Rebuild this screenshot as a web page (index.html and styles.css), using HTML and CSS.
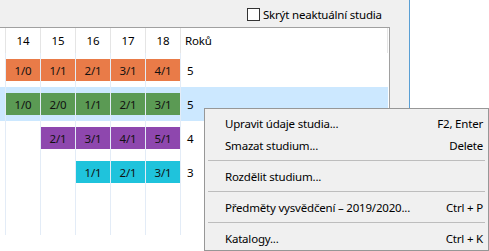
FILE: index.html
```html
<!DOCTYPE html>
<html lang="cs">
<head>
<meta charset="utf-8">
<title>Studia</title>
<link rel="stylesheet" href="styles.css">
</head>
<body>
<div class="app">
  <div class="left">
    <div class="toolbar">
      <label class="chk"><span class="box"></span><span>Skrýt neaktuální studia</span></label>
    </div>
    <div class="panel">
      <div class="row head">
        <div class="c0"></div>
        <div class="c">14</div>
        <div class="c">15</div>
        <div class="c">16</div>
        <div class="c">17</div>
        <div class="c">18</div>
        <div class="c last">Roků</div>
      </div>
      <div class="row">
        <div class="c0"></div>
        <div class="c"><span class="cell orange">1/0</span></div>
        <div class="c"><span class="cell orange">1/1</span></div>
        <div class="c"><span class="cell orange">2/1</span></div>
        <div class="c"><span class="cell orange">3/1</span></div>
        <div class="c"><span class="cell orange">4/1</span></div>
        <div class="c last"><span class="yrs">5</span></div>
      </div>
      <div class="row sel">
        <div class="c0"></div>
        <div class="c"><span class="cell green">1/0</span></div>
        <div class="c"><span class="cell green">2/0</span></div>
        <div class="c"><span class="cell green">1/1</span></div>
        <div class="c"><span class="cell green">2/1</span></div>
        <div class="c"><span class="cell green">3/1</span></div>
        <div class="c last"><span class="yrs">5</span></div>
      </div>
      <div class="row">
        <div class="c0"></div>
        <div class="c"></div>
        <div class="c"><span class="cell purple">2/1</span></div>
        <div class="c"><span class="cell purple">3/1</span></div>
        <div class="c"><span class="cell purple">4/1</span></div>
        <div class="c"><span class="cell purple">5/1</span></div>
        <div class="c last"><span class="yrs">4</span></div>
      </div>
      <div class="row">
        <div class="c0"></div>
        <div class="c"></div>
        <div class="c"></div>
        <div class="c"><span class="cell cyan">1/1</span></div>
        <div class="c"><span class="cell cyan">2/1</span></div>
        <div class="c"><span class="cell cyan">3/1</span></div>
        <div class="c last"><span class="yrs">3</span></div>
      </div>
      <div class="row filler">
        <div class="c0"></div>
        <div class="c"></div>
        <div class="c"></div>
        <div class="c"></div>
        <div class="c"></div>
        <div class="c"></div>
        <div class="c last"></div>
      </div>
    </div>
  </div>
  <div class="right"></div>
</div>

<div class="menu">
  <div class="item"><span>Upravit údaje studia...</span><span>F2, Enter</span></div>
  <div class="item"><span>Smazat studium...</span><span>Delete</span></div>
  <div class="sep"></div>
  <div class="item"><span>Rozdělit studium...</span><span></span></div>
  <div class="sep"></div>
  <div class="item"><span>Předměty vysvědčení – 2019/2020...</span><span>Ctrl + P</span></div>
  <div class="sep"></div>
  <div class="item"><span>Katalogy...</span><span>Ctrl + K</span></div>
</div>
</body>
</html>
```

FILE: styles.css
```css
* { box-sizing: border-box; }
html, body {
  margin: 0;
  height: 100%;
  overflow: hidden;
}
body {
  font-family: "Noto Sans", "Open Sans", sans-serif;
  font-size: 11.5px;
  letter-spacing: -0.2px;
  color: #000;
  background: #fff;
}
.app {
  display: flex;
  height: 251px;
}
.left {
  width: 410px;
  background: #f0f0f0;
  border-right: 1px solid #5a9fd4;
  display: flex;
  flex-direction: column;
}
.right {
  flex: 1;
  background: #fff;
}
.toolbar {
  height: 27px;
  display: flex;
  align-items: center;
  padding-left: 247px;
  padding-top: 1px;
}
.chk {
  display: flex;
  align-items: center;
  gap: 3px;
  white-space: nowrap;
}
.box {
  width: 13px;
  height: 13px;
  border: 1px solid #333;
  background: #fff;
}
.panel {
  width: 390px;
  flex: 1;
  background: #fff;
  border-top: 1px solid #a0a0a0;
  border-right: 1px solid #a0a0a0;
}
.row {
  display: grid;
  grid-template-columns: 5px repeat(5, 35px) 1fr;
  width: 388px;
  height: 34px;
}
.row .c {
  border-left: 1px solid #e3ecf7;
  padding-top: 6px;
}
.row.head {
  height: 25px;
}
.row.head .c {
  border-left-color: #e5e5e5;
  padding-top: 0;
  display: flex;
  align-items: center;
  justify-content: center;
}
.row.head .c.last {
  justify-content: flex-start;
  padding-left: 4px;
  border-right: 1px solid #e5e5e5;
}
.row.sel {
  background: #cce8ff;
}
.row.filler {
  height: 46px;
}
.cell {
  display: flex;
  align-items: center;
  justify-content: center;
  height: 22px;
  color: #111;
}
.orange { background: #e97b48; }
.green { background: #5b9a54; }
.purple { background: #8e47ae; }
.cyan { background: #1fc3dc; }
.yrs {
  display: flex;
  align-items: center;
  height: 22px;
  padding-left: 6px;
}
.menu {
  position: absolute;
  left: 204px;
  top: 108px;
  width: 285px;
  height: 143px;
  background: #f0f0f0;
  border: 1px solid #979797;
  padding: 3px 5px 1px 0;
}
.item {
  display: flex;
  justify-content: space-between;
  align-items: center;
  height: 22px;
  padding-left: 20px;
  white-space: nowrap;
}
.sep {
  height: 9px;
  display: flex;
  align-items: center;
  margin-left: 3px;
  margin-right: -2px;
}
.sep::before {
  content: "";
  flex: 1;
  height: 1px;
  background: #bdbdbd;
}
```
